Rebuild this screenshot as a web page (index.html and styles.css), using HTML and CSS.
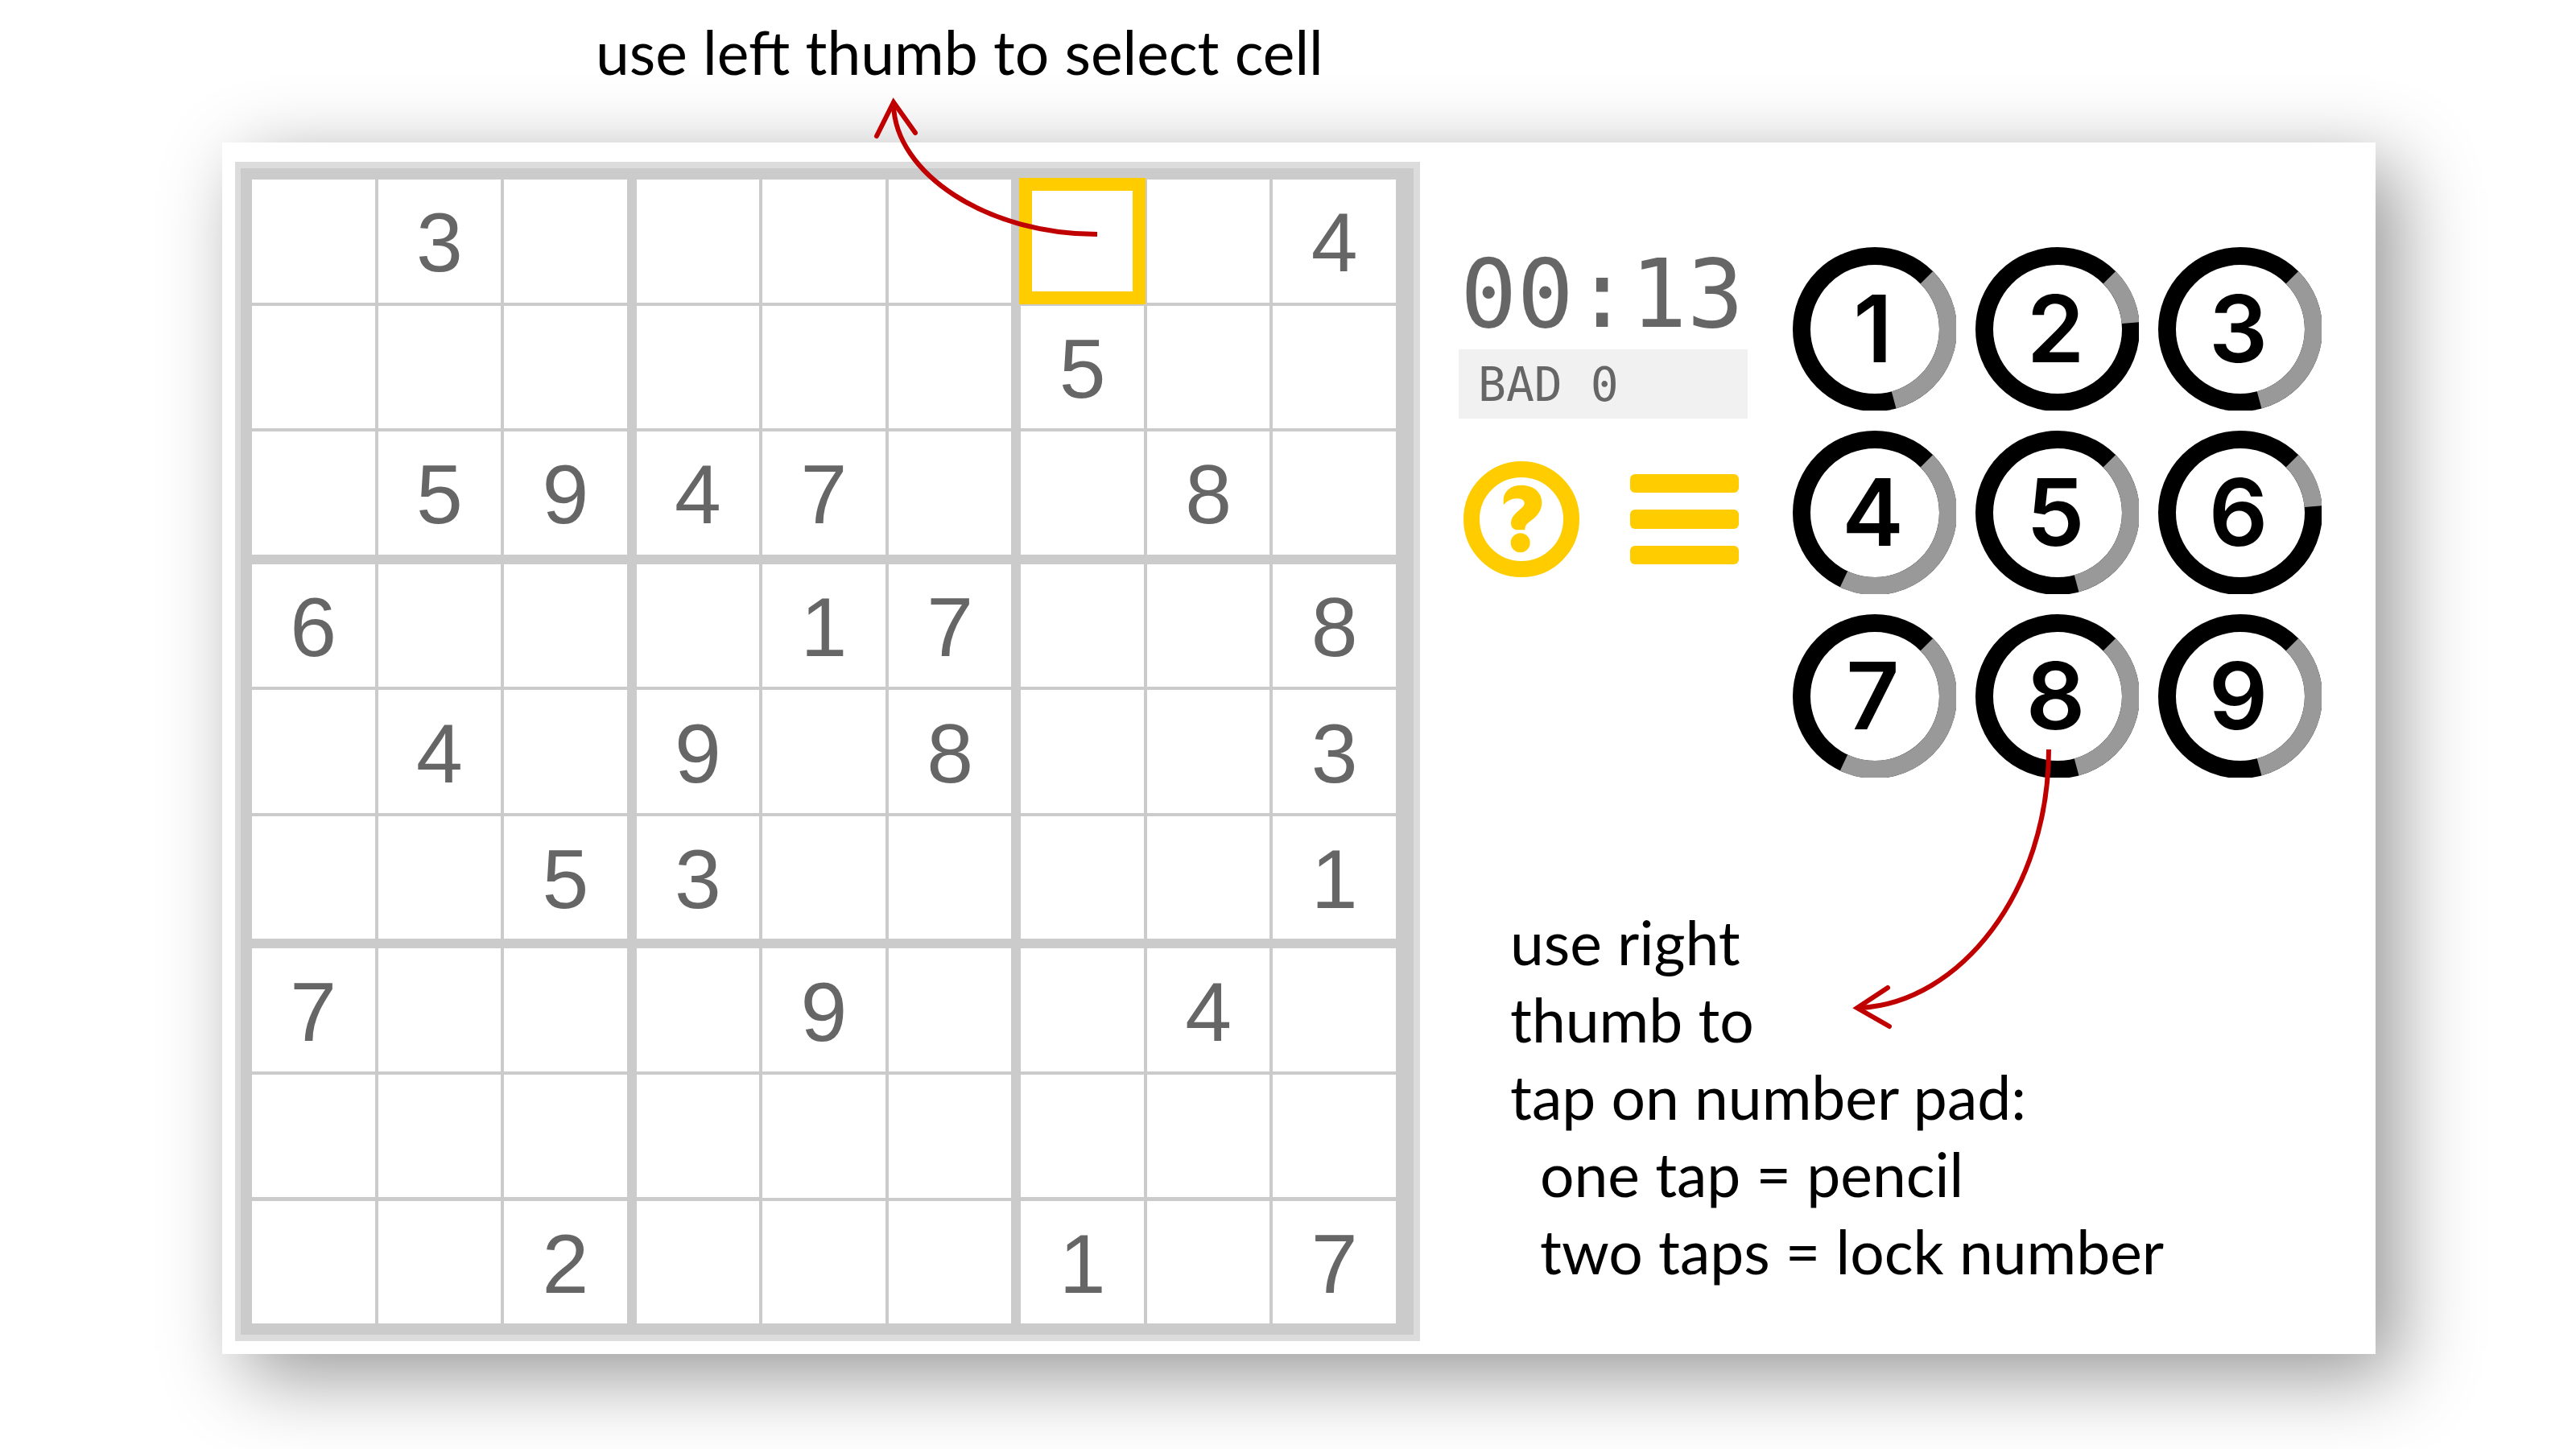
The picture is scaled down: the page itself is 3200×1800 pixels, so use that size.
FILE: index.html
```html
<!DOCTYPE html>
<html lang="en">
<head>
<meta charset="utf-8">
<title>Sudoku – how to play</title>
<link rel="stylesheet" href="styles.css">
</head>
<body>
<main class="page">
  <p class="caption caption-top">use left thumb to select cell</p>
  <div class="card">
    <section class="board" aria-label="Sudoku board">
      <div class="blocks">
        <div class="block"><button class="cell"></button><button class="cell">3</button><button class="cell"></button><button class="cell"></button><button class="cell"></button><button class="cell"></button><button class="cell"></button><button class="cell">5</button><button class="cell">9</button></div>
        <div class="block"><button class="cell"></button><button class="cell"></button><button class="cell"></button><button class="cell"></button><button class="cell"></button><button class="cell"></button><button class="cell">4</button><button class="cell">7</button><button class="cell"></button></div>
        <div class="block"><button class="cell selected"></button><button class="cell"></button><button class="cell">4</button><button class="cell">5</button><button class="cell"></button><button class="cell"></button><button class="cell"></button><button class="cell">8</button><button class="cell"></button></div>
        <div class="block"><button class="cell">6</button><button class="cell"></button><button class="cell"></button><button class="cell"></button><button class="cell">4</button><button class="cell"></button><button class="cell"></button><button class="cell"></button><button class="cell">5</button></div>
        <div class="block"><button class="cell"></button><button class="cell">1</button><button class="cell">7</button><button class="cell">9</button><button class="cell"></button><button class="cell">8</button><button class="cell">3</button><button class="cell"></button><button class="cell"></button></div>
        <div class="block"><button class="cell"></button><button class="cell"></button><button class="cell">8</button><button class="cell"></button><button class="cell"></button><button class="cell">3</button><button class="cell"></button><button class="cell"></button><button class="cell">1</button></div>
        <div class="block"><button class="cell">7</button><button class="cell"></button><button class="cell"></button><button class="cell"></button><button class="cell"></button><button class="cell"></button><button class="cell"></button><button class="cell"></button><button class="cell">2</button></div>
        <div class="block"><button class="cell"></button><button class="cell">9</button><button class="cell"></button><button class="cell"></button><button class="cell"></button><button class="cell"></button><button class="cell"></button><button class="cell"></button><button class="cell"></button></div>
        <div class="block"><button class="cell"></button><button class="cell">4</button><button class="cell"></button><button class="cell"></button><button class="cell"></button><button class="cell"></button><button class="cell">1</button><button class="cell"></button><button class="cell">7</button></div>
      </div>
      <svg class="arrow arrow-select" viewBox="1080 118 290 180" width="290" height="180" aria-hidden="true">
        <path d="M1110 130C1112 215 1225 291 1363 291"/>
        <path class="head" d="M1089 169L1110 127L1137 165" />
      </svg>
    </section>
    <section class="panel">
      <div class="controls">
        <div class="status">
          <div class="timer">00:13</div>
          <div class="bad">BAD 0</div>
          <div class="actions">
            <button class="action" aria-label="Help">
              <svg viewBox="115 849 432 432" width="144" height="144"><circle cx="331" cy="1065" r="186" fill="none" stroke="#fc0" stroke-width="60"/><path fill="#fc0" d="M264 1012V990C266 960 292 938 330 938C378 938 407 966 407 1003C407 1035 388 1056 362 1074C350 1082 344 1089 344 1105H318C302 1105 292 1095 292 1080C292 1058 307 1045 325 1029C336 1020 342 1014 342 1006C342 994 331 988 314 988C294 988 278 996 264 1012Z"/><circle cx="327" cy="1153" r="36" fill="#fc0"/></svg>
            </button>
            <button class="action" aria-label="Menu">
              <svg viewBox="0 0 135 112" width="135" height="112" fill="#fc0"><rect width="135" height="23" rx="6"/><rect y="44" width="135" height="24" rx="6"/><rect y="89" width="135" height="23" rx="6"/></svg>
            </button>
          </div>
        </div>
        <div class="pad">
          <button class="key"><svg class="ring" viewBox="0 0 203 203"><circle cx="102" cy="102" r="91"/><circle class="left" cx="102" cy="102" r="91" pathLength="360" stroke-dasharray="120 240" transform="rotate(-45 102 102)"/></svg><span>1</span></button>
          <button class="key"><svg class="ring" viewBox="0 0 203 203"><circle cx="102" cy="102" r="91"/><circle class="left" cx="102" cy="102" r="91" pathLength="360" stroke-dasharray="40 320" transform="rotate(-45 102 102)"/></svg><span>2</span></button>
          <button class="key"><svg class="ring" viewBox="0 0 203 203"><circle cx="102" cy="102" r="91"/><circle class="left" cx="102" cy="102" r="91" pathLength="360" stroke-dasharray="120 240" transform="rotate(-45 102 102)"/></svg><span>3</span></button>
          <button class="key"><svg class="ring" viewBox="0 0 203 203"><circle cx="102" cy="102" r="91"/><circle class="left" cx="102" cy="102" r="91" pathLength="360" stroke-dasharray="160 200" transform="rotate(-45 102 102)"/></svg><span>4</span></button>
          <button class="key"><svg class="ring" viewBox="0 0 203 203"><circle cx="102" cy="102" r="91"/><circle class="left" cx="102" cy="102" r="91" pathLength="360" stroke-dasharray="120 240" transform="rotate(-45 102 102)"/></svg><span>5</span></button>
          <button class="key"><svg class="ring" viewBox="0 0 203 203"><circle cx="102" cy="102" r="91"/><circle class="left" cx="102" cy="102" r="91" pathLength="360" stroke-dasharray="40 320" transform="rotate(-45 102 102)"/></svg><span>6</span></button>
          <button class="key"><svg class="ring" viewBox="0 0 203 203"><circle cx="102" cy="102" r="91"/><circle class="left" cx="102" cy="102" r="91" pathLength="360" stroke-dasharray="160 200" transform="rotate(-45 102 102)"/></svg><span>7</span></button>
          <button class="key"><svg class="ring" viewBox="0 0 203 203"><circle cx="102" cy="102" r="91"/><circle class="left" cx="102" cy="102" r="91" pathLength="360" stroke-dasharray="120 240" transform="rotate(-45 102 102)"/></svg><span>8</span></button>
          <button class="key"><svg class="ring" viewBox="0 0 203 203"><circle cx="102" cy="102" r="91"/><circle class="left" cx="102" cy="102" r="91" pathLength="360" stroke-dasharray="120 240" transform="rotate(-45 102 102)"/></svg><span>9</span></button>
          <svg class="arrow arrow-pad" viewBox="2296 931 254 352" width="254" height="352" aria-hidden="true">
            <path d="M2545 931C2545 1107 2435 1246 2310 1252"/>
            <path class="head" d="M2345 1227L2307 1252L2347 1275"/>
          </svg>
        </div>
      </div>
      <div class="caption notes">
        <p>use right<br>thumb to</p>
        <p>tap on number pad:</p>
        <p class="indent">one tap = pencil</p>
        <p class="indent">two taps = lock number</p>
      </div>
    </section>
  </div>
</main>
</body>
</html>
```
FILE: styles.css
```css
* { box-sizing: border-box; }
body { margin: 0; background: #fff; }
p { margin: 0; }
button {
  margin: 0;
  padding: 0;
  border: 0;
  background: none;
  color: inherit;
  font: inherit;
}
svg { display: block; }

.page { padding: 16px 249px 118px 276px; }

.caption {
  color: #000;
  font-family: Lato, sans-serif;
  font-size: 75px;
  line-height: 96px;
}
.caption-top { padding-left: 464px; margin-bottom: 65px; }

.card {
  display: flex;
  gap: 48px;
  padding: 24px 16px 16px;
  background: #fff;
  box-shadow: 27px 27px 92px rgba(0, 0, 0, 0.41);
}

/* board */
.board {
  position: relative;
  flex: 0 1 1472px;
  border: solid #dcdcdc;
  border-width: 8px 8px 8px 7px;
}
.blocks {
  display: grid;
  grid-template-columns: repeat(3, 1fr);
  gap: 12px;
  padding: 14px 22px 14px 14px;
  background: #cbcbcb;
}
.block {
  display: grid;
  grid-template-columns: repeat(3, 1fr);
  gap: 4px;
}
.cell {
  position: relative;
  min-width: 0;
  padding-top: 4px;
  aspect-ratio: 1;
  background: #fff;
  color: #666;
  font-family: "Liberation Sans", sans-serif;
  font-size: 104px;
  line-height: 120px;
}
.selected::after {
  content: "";
  position: absolute;
  inset: -2px;
  border: 16px solid #fc0;
}

/* side panel */
.panel { flex: 1; padding-top: 106px; }
.controls { display: flex; gap: 56px; }
.status {
  flex: 0 0 359px;
  color: #666;
  font-family: "DejaVu Sans Mono", monospace;
}
.timer {
  padding: 0 0 10px 2px;
  font-size: 117px;
  line-height: 117px;
}
.bad {
  padding: 2px 0 0 24px;
  background: #f1f1f1;
  font-size: 58px;
  line-height: 84px;
}
.actions {
  display: flex;
  align-items: center;
  gap: 63px;
  padding: 53px 6px 0;
}

.pad {
  position: relative;
  display: grid;
  grid-template-columns: repeat(3, 203px);
  gap: 25px 24px;
  align-content: start;
}
.key {
  display: grid;
  place-items: center;
  height: 203px;
  color: #000;
  font-family: Inter, sans-serif;
  font-size: 115px;
  font-weight: 600;
  line-height: 140px;
}
.key > * { grid-area: 1 / 1; }
.key span { padding-right: 4px; }
.ring {
  width: 203px;
  height: 203px;
  fill: none;
  stroke: #000;
  stroke-width: 22px;
}
.ring .left { stroke: #999; }

.notes { padding: 156px 0 0 64px; }
.indent { padding-left: 37px; }

/* annotation arrows */
.arrow {
  position: absolute;
  fill: none;
  stroke: #c00000;
  stroke-width: 6px;
  pointer-events: none;
}
.arrow .head { stroke-linecap: round; stroke-miterlimit: 8; }
.arrow-select { left: 781px; top: -91px; }
.arrow-pad { left: 69px; top: 624px; }
```
